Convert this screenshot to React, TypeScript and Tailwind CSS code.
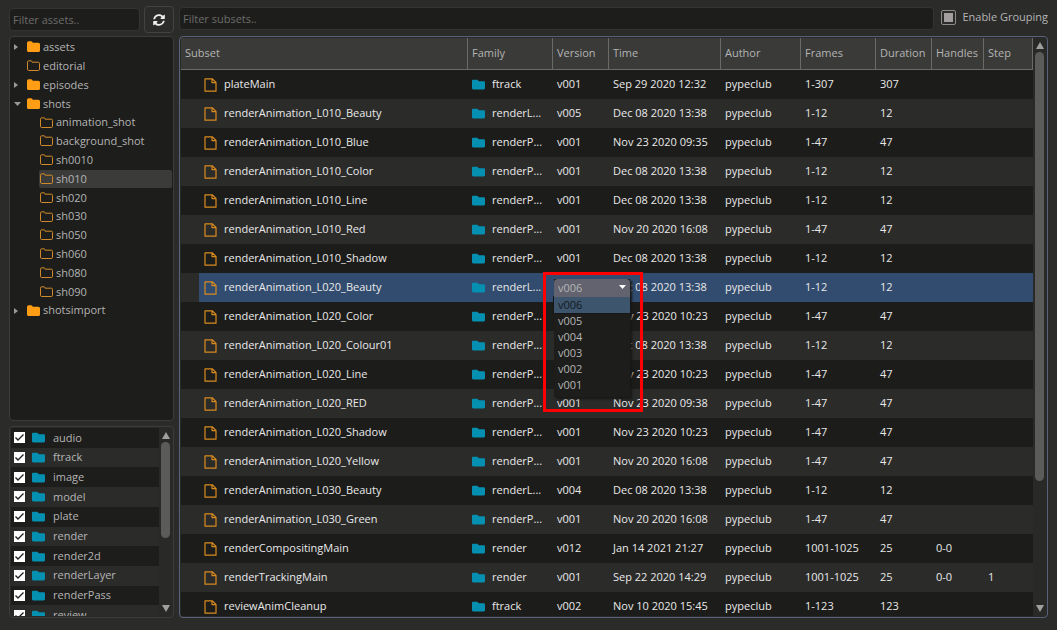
import React, { useState } from "react";
import { FaFolder, FaSyncAlt } from "react-icons/fa";

type TreeNode = { name: string; level: 0 | 1; arrow?: "right" | "down"; filled?: boolean };

const tree: TreeNode[] = [
  { name: "assets", level: 0, arrow: "right", filled: true },
  { name: "editorial", level: 0 },
  { name: "episodes", level: 0, arrow: "right", filled: true },
  { name: "shots", level: 0, arrow: "down", filled: true },
  { name: "animation_shot", level: 1 },
  { name: "background_shot", level: 1 },
  { name: "sh0010", level: 1 },
  { name: "sh010", level: 1 },
  { name: "sh020", level: 1 },
  { name: "sh030", level: 1 },
  { name: "sh050", level: 1 },
  { name: "sh060", level: 1 },
  { name: "sh080", level: 1 },
  { name: "sh090", level: 1 },
  { name: "shotsimport", level: 0, arrow: "right", filled: true },
];

const families = ["audio", "ftrack", "image", "model", "plate", "render", "render2d", "renderLayer", "renderPass", "review"];

const columns = [
  { label: "Subset", width: "" },
  { label: "Family", width: "w-[85px]" },
  { label: "Version", width: "w-[56px]" },
  { label: "Time", width: "w-[112px]" },
  { label: "Author", width: "w-[80px]" },
  { label: "Frames", width: "w-[75px]" },
  { label: "Duration", width: "w-[56px]" },
  { label: "Handles", width: "w-[52px]" },
  { label: "Step", width: "w-[49px]" },
];

type Row = [string, string, string, string, string, string, string, string];

const rows: Row[] = [
  ["plateMain", "ftrack", "v001", "Sep 29 2020 12:32", "1-307", "307", "", ""],
  ["renderAnimation_L010_Beauty", "renderL...", "v005", "Dec 08 2020 13:38", "1-12", "12", "", ""],
  ["renderAnimation_L010_Blue", "renderP...", "v001", "Nov 23 2020 09:35", "1-47", "47", "", ""],
  ["renderAnimation_L010_Color", "renderP...", "v001", "Dec 08 2020 13:38", "1-12", "12", "", ""],
  ["renderAnimation_L010_Line", "renderP...", "v001", "Dec 08 2020 13:38", "1-12", "12", "", ""],
  ["renderAnimation_L010_Red", "renderP...", "v001", "Nov 20 2020 16:08", "1-47", "47", "", ""],
  ["renderAnimation_L010_Shadow", "renderP...", "v001", "Dec 08 2020 13:38", "1-12", "12", "", ""],
  ["renderAnimation_L020_Beauty", "renderL...", "v006", "Dec 08 2020 13:38", "1-12", "12", "", ""],
  ["renderAnimation_L020_Color", "renderP...", "v001", "Nov 23 2020 10:23", "1-47", "47", "", ""],
  ["renderAnimation_L020_Colour01", "renderP...", "v001", "Dec 08 2020 13:38", "1-12", "12", "", ""],
  ["renderAnimation_L020_Line", "renderP...", "v001", "Nov 23 2020 10:23", "1-47", "47", "", ""],
  ["renderAnimation_L020_RED", "renderP...", "v001", "Nov 23 2020 09:38", "1-47", "47", "", ""],
  ["renderAnimation_L020_Shadow", "renderP...", "v001", "Nov 23 2020 10:23", "1-47", "47", "", ""],
  ["renderAnimation_L020_Yellow", "renderP...", "v001", "Nov 20 2020 16:08", "1-47", "47", "", ""],
  ["renderAnimation_L030_Beauty", "renderL...", "v004", "Dec 08 2020 13:38", "1-12", "12", "", ""],
  ["renderAnimation_L030_Green", "renderP...", "v001", "Nov 20 2020 16:08", "1-47", "47", "", ""],
  ["renderCompositingMain", "render", "v012", "Jan 14 2021 21:27", "1001-1025", "25", "0-0", ""],
  ["renderTrackingMain", "render", "v001", "Sep 22 2020 14:29", "1001-1025", "25", "0-0", "1"],
  ["reviewAnimCleanup", "ftrack", "v002", "Nov 10 2020 15:45", "1-123", "123", "", ""],
];

const versions = ["v006", "v005", "v004", "v003", "v002", "v001"];

function FolderOutline() {
  return (
    <svg viewBox="0 0 13 12" className="h-3 w-[13px] shrink-0" fill="none" stroke="#d08a2c" strokeLinejoin="round">
      <path d="M.5 2.2Q.5.8 1.8.8H4Q5 .8 5.1 2.2H11.3Q12.5 2.2 12.5 3.4V9.2Q12.5 10.5 11.3 10.5H1.7Q.5 10.5.5 9.2Z" />
    </svg>
  );
}

function FolderSolid() {
  return (
    <svg viewBox="0 0 13 12" className="h-3 w-[13px] shrink-0" fill="#ff9d14">
      <path d="M0 2Q0 .3 1.6.3H4.2Q5.5.3 5.7 1.8H11.4Q13 1.8 13 3.3V9.4Q13 11 11.4 11H1.6Q0 11 0 9.4Z" />
    </svg>
  );
}

function FileIcon() {
  return (
    <svg viewBox="0 0 13 14" className="h-[14px] w-[13px] shrink-0" fill="none" stroke="#d98a1f" strokeWidth="1.2" strokeLinejoin="round">
      <path d="M1 .8H8.2L12 4.4V13.2H1ZM8 1V4.6H12" />
    </svg>
  );
}

function Triangle({ dir, className }: { dir: "up" | "down" | "right"; className: string }) {
  const points = { up: "0,8 4,0 8,8", down: "0,0 8,0 4,8", right: "0,0 8,4 0,8" }[dir];
  return (
    <svg viewBox="0 0 8 8" preserveAspectRatio="none" className={className} fill="currentColor" aria-hidden="true">
      <polygon points={points} />
    </svg>
  );
}

function ScrollBar({ thumb }: { thumb: string }) {
  return (
    <div className="flex w-[9px] shrink-0 flex-col items-center gap-[3px] bg-[#292928] py-1 text-[#a0a0a0]" aria-hidden="true">
      <Triangle dir="up" className="h-[7px] w-2" />
      <div className="min-h-0 w-full flex-1">
        <div className={`w-full rounded-full bg-[#5b5b5a] ${thumb}`} />
      </div>
      <Triangle dir="down" className="h-[7px] w-2" />
    </div>
  );
}

function VersionPicker() {
  const [value, setValue] = useState("v006");
  return (
    <>
      <div className="absolute top-[6px] left-px z-20 w-[76px] bg-[#1d1d1b] shadow-[2px_2px_2px_#181818]">
        <div className="relative">
          <select
            aria-label="Version"
            value={value}
            onChange={(e) => setValue(e.target.value)}
            className="block h-[18px] w-full appearance-none rounded-t-sm bg-[#62636f] px-1 text-[11px] text-[#b5b5b5]"
          >
            {versions.map((v) => (
              <option key={v}>{v}</option>
            ))}
          </select>
          <Triangle dir="down" className="pointer-events-none absolute top-[6px] right-1 h-1 w-[7px] text-white" />
        </div>
        <ul role="listbox" aria-label="Versions" className="pb-1 text-[11px] leading-4 text-[#b5b5b5]">
          {versions.map((v) => (
            <li
              key={v}
              role="option"
              aria-selected={v === value}
              onClick={() => setValue(v)}
              className={v === value ? "bg-[#3d566e] px-1 text-[#15191e] outline outline-[#161616]" : "px-1"}
            >
              {v}
            </li>
          ))}
        </ul>
      </div>
      <div className="pointer-events-none absolute -top-px -left-[10px] z-30 h-[140px] w-[100px] border-3 border-[#ff0000]" />
    </>
  );
}

function SubsetRow({ row, index }: { row: Row; index: number }) {
  const [subset, family, version, time, frames, duration, handles, step] = row;
  const selected = index === 7;
  const cell = `p-0 pl-1 whitespace-nowrap ${selected ? "bg-[#324c6f]" : ""}`;
  return (
    <tr className={`h-[29px] ${index % 2 ? "bg-[#2b2b2a]" : "bg-[#1c1c1a]"}`} aria-selected={selected}>
      <td className="p-0 pl-[18px]">
        <div className={`flex h-[29px] items-center gap-[7px] pl-[5px] ${selected ? "bg-[#324c6f]" : ""}`}>
          <FileIcon />
          {subset}
        </div>
      </td>
      <td className={cell}>
        <div className="flex items-center gap-[7px]">
          <FaFolder className="size-[13px] shrink-0 text-[#0590b2]" />
          {family}
        </div>
      </td>
      <td className={`${cell} relative`}>{selected ? <VersionPicker /> : version}</td>
      <td className={cell}>{time}</td>
      <td className={cell}>pypeclub</td>
      <td className={cell}>{frames}</td>
      <td className={cell}>{duration}</td>
      <td className={cell}>{handles}</td>
      <td className={cell}>{step}</td>
    </tr>
  );
}

export default function App() {
  return (
    <div className="flex h-screen gap-[5px] bg-[#2b2b2a] pt-[6px] pr-[9px] pb-3 pl-[9px] font-['Open_Sans','Noto_Sans',sans-serif] text-[11px] text-[#b4b4b4]">
      <aside className="flex w-[165px] shrink-0 flex-col">
        <div className="flex h-[27px] items-center gap-1">
          <input
            aria-label="Filter assets"
            placeholder="Filter assets.."
            className="h-[23px] min-w-0 flex-1 rounded-sm border border-[#343433] bg-[#1d1d1b] px-[3px] placeholder:text-[#6c6c6b]"
          />
          <button aria-label="Refresh" className="flex h-[27px] w-[30px] items-center justify-center rounded-sm border border-[#434342] bg-[#2b2b2a] text-[#f0f0f0]">
            <FaSyncAlt className="size-3" />
          </button>
        </div>

        <div className="mt-[3px] min-h-0 flex-1 overflow-hidden rounded-sm border border-[#3c3c3b] bg-[#1d1d1b] pt-px">
          <ul role="tree" className="grid h-[282px] auto-rows-fr">
            {tree.map((n) => (
              <li key={n.name} role="treeitem" aria-selected={n.name === "sh010"} className={`flex ${n.level ? "pl-[29px]" : "pl-[4px]"} pr-px`}>
                {n.level === 0 && (
                  <span className="flex w-[12px] items-center text-[#9a9a9a]">
                    {n.arrow === "right" && <Triangle dir="right" className="h-[6px] w-1" />}
                    {n.arrow === "down" && <Triangle dir="down" className="h-1 w-[7px]" />}
                  </span>
                )}
                <span className={`flex flex-1 items-center gap-[3px] rounded-xs pl-px ${n.name === "sh010" ? "bg-[#3b3b3a]" : ""}`}>
                  {n.filled ? <FolderSolid /> : <FolderOutline />}
                  {n.name}
                </span>
              </li>
            ))}
          </ul>
        </div>

        <div className="mt-[5px] flex h-[192px] overflow-hidden rounded-sm border border-[#3c3c3b] bg-[#292928] p-px pr-[3px]">
          <div className="mr-[2px] min-w-0 flex-1 overflow-hidden">
            <ul className="grid h-[197px] auto-rows-fr">
              {families.map((f, i) => (
                <li key={f} className={i % 2 ? "bg-[#2b2b2a]" : "bg-[#1d1d1b]"}>
                  <label className="flex h-full items-center pl-[3px]">
                    <span className="relative flex size-[11px]">
                      <input type="checkbox" defaultChecked className="peer size-[11px] appearance-none bg-white" />
                      <svg viewBox="0 0 11 11" className="pointer-events-none absolute inset-0 hidden size-[11px] peer-checked:block" fill="none" stroke="#222" strokeWidth="1.4">
                        <path d="M1.5 5.5L4 8L9.5 2.5" />
                      </svg>
                    </span>
                    <FaFolder className="mr-2 ml-[7px] size-[13px] text-[#0590b2]" />
                    {f}
                  </label>
                </li>
              ))}
            </ul>
          </div>
          <ScrollBar thumb="h-3/5" />
        </div>
      </aside>

      <main className="flex min-w-0 flex-1 flex-col">
        <div className="flex h-[27px] items-center gap-[7px]">
          <input
            aria-label="Filter subsets"
            placeholder="Filter subsets.."
            className="mb-[3px] h-[23px] min-w-0 flex-1 rounded-sm border border-[#343433] bg-[#1d1d1b] px-[3px] placeholder:text-[#6c6c6b]"
          />
          <label className="mb-[5px] flex items-center gap-[6px]">
            <input
              type="checkbox"
              defaultChecked
              className="size-[15px] appearance-none rounded-xs border border-[#8b8b8b] bg-[#2b2b2a] p-[2px] checked:bg-[#a29ea0] checked:bg-clip-content"
            />
            Enable Grouping
          </label>
        </div>

        <div className="mt-[3px] flex min-h-0 flex-1 overflow-hidden rounded-sm border border-[#59627a] bg-[#292928] p-px pr-[3px]">
          <div className="mr-[2px] min-w-0 flex-1 overflow-hidden">
            <table className="w-full table-fixed border-collapse text-left text-[#e9e9e9]">
              <thead>
                <tr className="h-8 bg-[#3a3a38] text-[#b4b4b4]">
                  {columns.map((c) => (
                    <th key={c.label} className={`p-0 ${c.width}`}>
                      <div className="flex h-8 items-center border-r border-b border-[#6a6a69] pl-1 font-normal">{c.label}</div>
                    </th>
                  ))}
                </tr>
              </thead>
              <tbody>
                {rows.map((r, i) => (
                  <SubsetRow key={r[0]} row={r} index={i} />
                ))}
              </tbody>
            </table>
          </div>
          <ScrollBar thumb="h-[78%]" />
        </div>
      </main>
    </div>
  );
}
